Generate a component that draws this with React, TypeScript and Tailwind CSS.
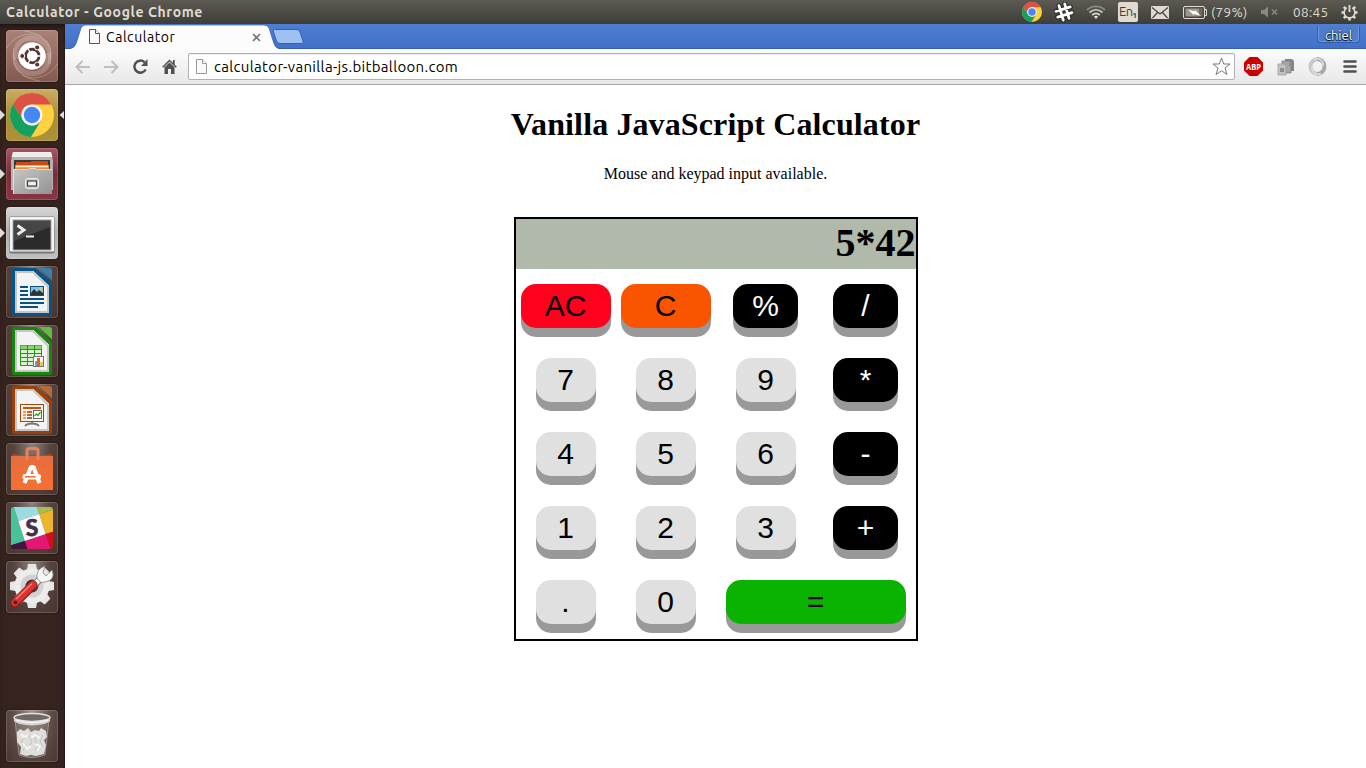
import React from "react";

const uiFont = "font-['Ubuntu','Noto_Sans',sans-serif]";

function ChromeLogo({ size }: { size: number }) {
  return (
    <svg width={size} height={size} viewBox="0 0 44 44">
      <circle cx="22" cy="22" r="22" fill="#ffd040" />
      <path d="M3 11 A22 22 0 0 1 41.300 11.500 H22 A10.500 10.500 0 0 0 12.500 27Z" fill="#dd5144" />
      <path d="M3 11 A22 22 0 0 0 21 44 L31 27.500 A10.500 10.500 0 0 1 12.900 27Z" fill="#14a05e" />
      <circle cx="22" cy="22" r="10.500" fill="#f5f5f5" />
      <circle cx="22" cy="22" r="8.200" fill="#4587f3" />
    </svg>
  );
}

function PageIcon({ color }: { color: string }) {
  return (
    <svg width="11" height="15" viewBox="0 0 11 15" fill="#fafafa" stroke={color}>
      <path d="M0.500 0.500H6.500L10.500 4.500V14.500H0.500Z" />
      <path d="M6.500 0.500V4.500H10.500" />
    </svg>
  );
}

function TopBar() {
  return (
    <header className={`flex h-6 shrink-0 items-center bg-linear-to-b from-[#5c5a52] to-[#3e3d38] pl-1.5 text-[#dfdbd2] ${uiFont}`}>
      <div className="w-[1016px] text-[14px] leading-6 font-bold">
        <span className="inline-block tracking-[0.620px] whitespace-nowrap">Calculator - Google Chrome</span>
      </div>
      <div className="flex w-8 items-center"><ChromeLogo size={20} /></div>
      <svg className="mr-3" width="20" height="20" viewBox="0 0 20 20" fill="none" strokeLinecap="round">
        <g transform="rotate(-17 10 10)">
          <path d="M7 2.500V17.500M13 2.500V17.500M2.500 7H17.500M2.500 13H17.500" stroke="#252521" strokeWidth="4.800" />
          <path d="M7 2.500V17.500M13 2.500V17.500M2.500 7H17.500M2.500 13H17.500" stroke="#fff" strokeWidth="2.800" />
        </g>
      </svg>
      <svg className="mr-3" width="20" height="16" viewBox="0 0 20 16" fill="none" strokeWidth="1.800">
        <path d="M1 6C6 1.200 14 1.200 19 6" stroke="#8b8981" />
        <path d="M3.500 8.500C7.500 5 12.500 5 16.500 8.500" stroke="#c8c4bb" />
        <path d="M6.200 11C8.500 9 11.500 9 13.800 11" stroke="#dfdbd2" />
        <path d="M7.800 12.500Q10 11 12.200 12.500L10 15Z" fill="#dfdbd2" stroke="none" />
      </svg>
      <div className="mr-[13px] flex h-5 w-5 items-center justify-center rounded-[2px] bg-[#dfdbd2] text-[13px] text-[#3f3e39]">
        <span className="tracking-[-0.500px]">En</span><span className="pt-2 text-[8px] font-semibold">1</span>
      </div>
      <svg className="mr-3.5" width="18" height="13" viewBox="0 0 18 13">
        <rect width="18" height="13" rx="1" fill="#dfdbd2" />
        <path d="M1 1.500L9 8L17 1.500M1.500 12L6.500 6.500M16.500 12L11.500 6.500" stroke="#45443e" fill="none" strokeWidth="1.200" />
      </svg>
      <svg className="mr-1" width="24" height="13" viewBox="0 0 24 13">
        <rect x="0.500" y="0.500" width="21" height="12" rx="1.500" fill="none" stroke="#dfdbd2" />
        <path d="M21.500 3.500H23.500V9.500H21.500" fill="none" stroke="#dfdbd2" />
        <rect x="2.500" y="2.500" width="13.500" height="8" fill="#99968e" />
        <rect x="16" y="2.500" width="3.500" height="8" fill="#6b6962" />
        <path d="M5 3.500L12 5.500L11.500 3.600L18 10L10.500 7.700L11 9.500Z" fill="#fff" />
      </svg>
      <span className="w-[50px] text-[13.500px] leading-6 tracking-[0.300px] whitespace-nowrap">(79%)</span>
      <svg className="mr-[15px]" width="17" height="12" viewBox="0 0 17 12">
        <path d="M0 4H3L7 0.500V11.500L3 8H0Z" fill="#8b8981" />
        <path d="M11 3.500L16 8.500M16 3.500L11 8.500" stroke="#8b8981" strokeWidth="1.500" />
      </svg>
      <span className="w-12 text-[13.500px] leading-6 tracking-[0.350px] whitespace-nowrap">08:45</span>
      <svg width="17" height="17" viewBox="0 0 17 17" fill="none" stroke="#dfdbd2">
        <path d="M2.800 14.200L4.600 12.400M14.200 14.200L12.400 12.400M0.500 8.500H3M14 8.500H16.500M8.500 16.500V14M2.800 2.800L4.600 4.600M14.200 2.800L12.400 4.600" strokeWidth="2.600" />
        <path d="M5.700 3.900A5.400 5.400 0 1 0 11.300 3.900" strokeWidth="1.600" />
        <path d="M8.500 1V8" strokeWidth="1.800" />
      </svg>
    </header>
  );
}

function UbuntuIcon() {
  return (
    <>
      <path d="M8 30C2 12 22 -2 40 10C47 15 47 30 41 37C45 24 39 13 27 11C16 9 10 18 12 28Z" fill="#fff" opacity=".2" />
      <path d="M44 22C50 40 32 52 14 43C7 38 6 30 8 22C10 34 18 41 27 41C36 41 41 33 39 24Z" fill="#fff" opacity=".2" />
      <path d="M18 1C38 3 48 16 44 34M1 18C8 5 24 1 36 7M34 51C14 48 4 36 8 18M51 34C44 47 28 51 16 45" fill="none" stroke="#fff" opacity=".25" />
      <circle cx="26" cy="26.500" r="14" fill="#3d241f" opacity=".25" />
      <circle cx="26" cy="26" r="13.800" fill="#fff" />
      <circle cx="26.300" cy="26" r="6.700" fill="none" stroke="#54362f" strokeWidth="3" />
      <path d="M26.300 26H37M26.300 26L21 17M26.300 26L21 35" stroke="#fff" strokeWidth="1.300" />
      <circle cx="26.300" cy="26" r="5.200" fill="#fff" />
      <g fill="#54362f" stroke="#fff" strokeWidth="1">
        <circle cx="16.200" cy="26" r="2.500" /><circle cx="31.200" cy="17.400" r="2.500" /><circle cx="31.200" cy="34.600" r="2.500" />
      </g>
    </>
  );
}

function FilesIcon() {
  return (
    <>
      <path d="M7 4H45L47 13V42H5V13Z" fill="#b3b3b1" />
      <path d="M7 4H45L46.500 9H5.500Z" fill="#ededec" />
      <rect x="8" y="12" width="36" height="12" fill="#3b3533" />
      <path d="M10 14H24L26 13H42V24H10Z" fill="#c94c14" />
      <path d="M9 17H43V24H9Z" fill="#f0893c" />
      <path d="M10 18.500H42" stroke="#fff1c9" strokeWidth="1.300" />
      <path d="M8 21H22L23 20H30L31 21H46V46H7V21Z" fill="url(#steel)" />
      <path d="M7.500 46V21.500H22L23 20.500H30L31 21.500H46" stroke="#ddd" fill="none" />
      <rect x="19.500" y="30.500" width="13" height="10" rx="2" fill="#c9c9c9" stroke="#eee" />
      <rect x="21.500" y="33" width="9" height="5" fill="#eee" stroke="#444" strokeWidth="1.200" />
    </>
  );
}

function TerminalIcon() {
  return (
    <>
      <rect x="3.500" y="9.500" width="45" height="37" rx="1.500" fill="#777" />
      <rect x="4" y="10" width="44" height="34.500" rx="1" fill="#f4f4f4" />
      <rect x="6.500" y="12.500" width="39" height="31" fill="#aaa" />
      <rect x="7.500" y="13.500" width="37" height="29" fill="#2b2b2b" />
      <path d="M8 14H44V20L8 34Z" fill="#fff" opacity=".13" />
      <path d="M11.500 18.500L18 23L11.500 27.500" fill="none" stroke="#eee" strokeWidth="2.800" />
      <path d="M20 29.500H28" stroke="#eee" strokeWidth="2.200" />
    </>
  );
}

function Sheet({ color, corner }: { color: string; corner: string }) {
  return (
    <>
      <path d="M8 2H30L46 17V48Q46 50 44 50H8Q6 50 6 48V4Q6 2 8 2Z" fill={color} />
      <path d="M9 5H27L43 20V47H9Z" fill="#c5c5c5" />
      <path d="M11 7H26.500L41 21V45H11Z" fill="#f3f3f3" />
      <path d="M33 2H43.500Q46 2 46 4.500V14.500Z" fill={corner} />
      <path d="M27 5L43 20" stroke="#fff" strokeWidth="1" opacity=".7" />
    </>
  );
}

function WriterIcon() {
  return (
    <>
      <Sheet color="#07548a" corner="#3b7fab" />
      <path d="M14 21H22M14 25H22M14 29H22M14 33H38M14 37H38M14 41H32" stroke="#0a5082" strokeWidth="2" />
      <rect x="24.500" y="20.500" width="13" height="9" fill="#83c5ea" stroke="#0a5082" />
      <path d="M25 29V27L28 23L31 26L33 24L37 27V29Z" fill="#333" /><circle cx="35" cy="22.500" r="1.500" fill="#f3c92c" />
    </>
  );
}

function CalcIcon() {
  return (
    <>
      <Sheet color="#19850e" corner="#5ebd40" />
      <rect x="14.500" y="20.500" width="21" height="20" fill="#d7f5cc" stroke="#269618" />
      <rect x="14.500" y="20.500" width="21" height="4" fill="#8ad276" />
      <path d="M14 24.500H36M14 28.500H36M14 32.500H36M14 36.500H36M21.500 20V41M28.500 20V41" stroke="#269618" />
      <rect x="27.500" y="31.500" width="10" height="10" fill="#fff" stroke="#777" />
      <path d="M30 36V41" stroke="#55a7db" strokeWidth="2" /><path d="M32.500 33V41" stroke="#e86118" strokeWidth="3" /><path d="M35.500 37V41" stroke="#efbd20" strokeWidth="2.500" />
    </>
  );
}

function ImpressIcon() {
  return (
    <>
      <Sheet color="#9a4009" corner="#b7683d" />
      <path d="M26 38V40M19 42Q21 39.500 26 39.500T33 42" fill="none" stroke="#777" strokeWidth="1.800" />
      <rect x="14.500" y="20.500" width="23" height="17" fill="#fff2e8" stroke="#a8440b" />
      <path d="M17 24H35" stroke="#c75212" strokeWidth="2" />
      <path d="M17 28H20M17 31H20M17 34H20" stroke="#ed9866" strokeWidth="2" />
      <path d="M21 28H26M21 31H26M21 34H26" stroke="#963a08" strokeWidth="1.700" />
      <rect x="27.500" y="26.500" width="8" height="8" fill="#f8fff4" stroke="#666" />
      <path d="M28.500 32L30.500 30L32 31.500L34.500 28" stroke="#36a41c" strokeWidth="1.400" fill="none" />
    </>
  );
}

function SoftwareIcon() {
  return (
    <>
      <path d="M8 10L5 14H47L44 10L41 12H11Z" fill="#b84420" />
      <rect x="5" y="13" width="42" height="34" fill="url(#bag)" />
      <path d="M21 17V8Q21 5.500 23.500 5.500H29.500Q32 5.500 32 8V17" fill="none" stroke="#e9825b" strokeWidth="3" />
      <path d="M18.500 40L25 24H27.500L33.500 40" fill="none" stroke="#fff" strokeWidth="4.200" strokeLinejoin="bevel" />
      <rect x="16.500" y="31" width="18.500" height="5.500" rx="2.700" fill="#fff" />
      <path d="M19 33.700H29.500" stroke="#ed6832" strokeWidth="1.600" />
    </>
  );
}

function SlackIcon() {
  return (
    <>
      <clipPath id="slackClip"><rect x="5" y="5" width="42" height="42" rx="3" /></clipPath>
      <g clipPath="url(#slackClip)">
        <g transform="rotate(-18 26 25.500)">
          <path d="M-10 -10H15V36H-10Z" fill="#47c39c" />
          <path d="M15 -10H37V15H15Z" fill="#9bdce2" />
          <path d="M37 -10H65V15H37Z" fill="#a7bd51" />
          <path d="M37 15H65V36H37Z" fill="#ecb52a" />
          <path d="M37 36H65V65H37Z" fill="#d50d17" />
          <path d="M15 36H37V65H15Z" fill="#e41773" />
          <path d="M-10 36H15V65H-10Z" fill="#42143f" />
          <path d="M15 15H37V36H15Z" fill="#fafafa" />
        </g>
      </g>
      <text x="26" y="34" textAnchor="middle" transform="rotate(-3 26 26)" className="fill-[#443047] stroke-[#443047] font-['Lato',sans-serif] text-[23px] font-black [stroke-width:0.600px]">S</text>
    </>
  );
}

function SettingsIcon() {
  return (
    <>
      {[0, 45, 90, 135, 180, 225, 270, 315].map((a) => (
        <path key={a} d="M20.500 11L22 3H30L31.500 11Z" fill="#e6e6e6" transform={`rotate(${a} 26 25)`} />
      ))}
      <circle cx="26" cy="25" r="17.500" fill="#ececec" />
      <circle cx="26" cy="25" r="11.500" fill="#d2d2d2" /><circle cx="26" cy="25" r="6.500" fill="#44312e" />
      <path d="M26 27L34 18" stroke="#777" strokeWidth="7" />
      <path d="M26 26L35 17" stroke="#f3f3f3" strokeWidth="5" />
      <path d="M31 17Q30 8 39 5L37 12L40 15L46 9Q50 19 39 21Q34 23 31 17Z" fill="#f6f6f6" stroke="#888" strokeWidth=".8" />
      <path d="M9 42L27 24" stroke="#951b19" strokeWidth="9" strokeLinecap="round" />
      <path d="M9 41.500L27 23.500" stroke="#d9352e" strokeWidth="7" strokeLinecap="round" />
      <path d="M10 38L26 22.500" stroke="#f38780" strokeWidth="1.200" />
      <circle cx="9.500" cy="41.500" r="2" fill="#51211f" />
    </>
  );
}

function TrashIcon() {
  return (
    <>
      <path d="M9 10L13 45Q26 50 39 45L43 10Z" fill="#999" opacity=".3" />
      <path d="M9 10L13 45Q26 50 39 45L43 10" fill="none" stroke="#c9c7c7" opacity=".5" />
      <path d="M11 22L14 19L18 21L22 18L25 22L29 20L33 21L35 18L40 21L41 27L38 30L40 35L38 44L30 46L25 45L20 46L14 44L15 37L11 32Z" fill="#dededb" />
      <path d="M16 24L19 28L15 31L20 35L17 41M22 25L26 31L23 38M31 24L29 30L32 36L29 41M37 25L34 31L37 37" fill="none" stroke="#b9b9b6" strokeWidth=".8" />
      <path d="M15 24L18 27L22 25M25 28L29 25L34 28M17 33L21 39L25 36M29 34L34 36L31 41" fill="none" stroke="#f5f5f5" strokeWidth="2" />
      <ellipse cx="26" cy="7.500" rx="18" ry="4" fill="#6e6868" stroke="#e3e3e3" strokeWidth="1.500" />
      <path d="M8 8Q26 15 44 8V11Q42 14.500 26 15.500Q10 14.500 8 11Z" fill="#d6d6d5" />
      <path d="M10 10Q26 15 42 10" stroke="#fff" fill="none" />
    </>
  );
}

const tile =
  "shrink-0 rounded-[4px] shadow-[inset_0_0_0_1px_rgba(255,255,255,0.16),0_0_1px_1px_rgba(0,0,0,0.18)]";
const darkTile = "bg-[radial-gradient(ellipse_at_50%_0%,#8b807b_0%,#56443e_50%,#48342f_100%)]";

const apps: { bg: string; icon: React.ReactNode; left?: boolean; right?: boolean }[] = [
  { bg: "bg-linear-to-b from-[#aa8278] to-[#86594e]", icon: <UbuntuIcon /> },
  { bg: "bg-linear-to-b from-[#c9ae65] via-[#aa8e36] to-[#ad9138]", icon: <g transform="translate(4 4)"><ChromeLogo size={44} /></g>, left: true, right: true },
  { bg: "bg-linear-to-b from-[#a65663] via-[#7b2b38] to-[#883642]", icon: <FilesIcon />, left: true },
  { bg: "bg-linear-to-b from-[#d6d6d6] via-[#aeaeae] to-[#c0c0c0]", icon: <TerminalIcon />, left: true },
  { bg: darkTile, icon: <WriterIcon /> },
  { bg: darkTile, icon: <CalcIcon /> },
  { bg: darkTile, icon: <ImpressIcon /> },
  { bg: darkTile, icon: <SoftwareIcon /> },
  { bg: darkTile, icon: <SlackIcon /> },
  { bg: darkTile, icon: <SettingsIcon /> },
];

function Launcher() {
  return (
    <nav className="flex w-[65px] shrink-0 flex-col gap-[7px] bg-[#35231e] pt-1.5 pb-1.5 shadow-[inset_0_4px_4px_-2px_#1b1311,inset_-1px_0_0_#2a1b17]">
      <svg width="0" height="0" className="-mb-[7px]">
        <linearGradient id="steel" x1="0" y1="0" x2="1" y2="1"><stop stopColor="#c7c7c6" /><stop offset="1" stopColor="#929291" /></linearGradient>
        <linearGradient id="bag" x1="0" y1="0" x2="0" y2="1"><stop stopColor="#e56d40" /><stop offset="1" stopColor="#f77030" /></linearGradient>
      </svg>
      {apps.map((app, i) => (
        <div key={i} className="flex h-[52px] shrink-0 items-center">
          <svg width="6" height="10" viewBox="0 0 6 10">{app.left && <path d="M0 0L5 5L0 10Z" fill="#ddd" />}</svg>
          <svg width="52" height="52" viewBox="0 0 52 52" className={`${tile} ${app.bg}`}>{app.icon}</svg>
          <svg width="7" height="10" viewBox="0 0 7 10">{app.right && <path d="M6 1L1.500 5L6 9Z" fill="#ddd" />}</svg>
        </div>
      ))}
      <div className="mt-auto flex h-[52px] pl-1.5">
        <svg width="52" height="52" viewBox="0 0 52 52" className={`${tile} bg-[radial-gradient(ellipse_at_50%_0%,#a0928d_0%,#634f4a_50%,#48342f_100%)]`}><TrashIcon /></svg>
      </div>
    </nav>
  );
}

function TabStrip() {
  return (
    <div className={`flex h-[25px] shrink-0 bg-linear-to-b from-[#4f7ed3] to-[#4070c7] pl-0.5 shadow-[inset_0_-1px_0_#335fae] ${uiFont}`}>
      <div className="grid w-[208px]">
        <svg className="col-start-1 row-start-1" width="214" height="25" viewBox="0 0 214 25">
          <path d="M3 25Q7.500 24 9 20L14 4Q15.500 1 18 1H197Q200.500 1 202 4L207 20Q208.500 24 212 25Z" fill="#fcfcfc" />
          <path d="M3 24.500Q7.500 23.500 9 19.500L14 4Q15.500 1 18 1H197Q200.500 1 202 4L207 19.500Q208.500 23.500 212 24.500" fill="none" stroke="#3159a3" strokeWidth=".7" />
        </svg>
        <div className="z-10 col-start-1 row-start-1 flex h-[25px] items-center pl-[22px] text-black">
          <PageIcon color="#555" />
          <span className="ml-[6px] w-[146px] pt-px text-[14px] leading-6 tracking-[0.550px]">Calculator</span>
          <svg className="mt-px" width="9" height="9" viewBox="0 0 9 9"><path d="M1 1L8 8M8 1L1 8" stroke="#777" strokeWidth="1.700" /></svg>
        </div>
      </div>
      <svg className="mt-[5px] -ml-[3px]" width="32" height="16" viewBox="0 0 32 16">
        <path d="M2.500 .5H25Q27 .5 28 3L31 12Q32 14.500 29.500 14.500H8Q5.500 14.500 4.500 12L1.500 3Q.5 .5 2.500 .5Z" fill="#9dc1f3" stroke="#3560ae" />
      </svg>
      <div className="mt-[2px] mr-[6px] ml-auto h-[17px] w-[43px] rounded-b-[4px] border-x border-b border-[#345da9] bg-[#4f7dce] text-center text-[13px] leading-[18px] text-white shadow-[inset_-1px_-1px_0_#7197dc,inset_1px_0_0_#7197dc] [text-shadow:0_0_2px_#000,0_1px_1px_#000]">chiel</div>
    </div>
  );
}

function Toolbar() {
  return (
    <div className={`flex h-9 shrink-0 items-center border-b border-[#a6a6a6] bg-linear-to-b from-[#fcfcfc] to-[#e7e7e7] pl-[10px] ${uiFont}`}>
      <svg className="mr-3.5" width="15" height="14" viewBox="0 0 15 14" fill="none" stroke="#bebebe" strokeWidth="2"><path d="M15 7H2M7.500 1L1.500 7L7.500 13" /></svg>
      <svg className="mr-3.5" width="15" height="14" viewBox="0 0 15 14" fill="none" stroke="#bebebe" strokeWidth="2"><path d="M0 7H13M7.500 1L13.500 7L7.500 13" /></svg>
      <svg className="mr-3.5" width="15" height="15" viewBox="0 0 15 15"><path d="M12.700 10.500A6 6 0 1 1 11.500 3.200" fill="none" stroke="#505050" strokeWidth="2.500" /><path d="M14.500 0V7H8Z" fill="#505050" /></svg>
      <svg className="mr-[11px]" width="15" height="15" viewBox="0 0 15 15"><path d="M7.500 3.500L12.500 8.300V15H9V10H6V15H2.500V8.300Z" fill="#505050" /><path d="M0.700 8.300L7.500 1.500L14.300 8.300" stroke="#505050" fill="none" strokeWidth="1.500" /><path d="M11.800 1V5.500" stroke="#505050" strokeWidth="1.800" /></svg>
      <div className="flex h-[27px] w-[1047px] items-center rounded-[2px] border border-[#b0b0b0] bg-white pr-[3px] pl-[7px] shadow-[inset_0_1px_0_#eee]">
        <PageIcon color="#999" />
        <span className="ml-[7px] flex-1 text-[15px] leading-[25px] tracking-[0.330px] text-black">calculator-vanilla-js.bitballoon.com</span>
        <svg width="19" height="19" viewBox="0 0 19 19" fill="#fff" stroke="#777"><path d="M9.500 1L11.700 7H18L13 11L15 17.500L9.500 13.700L4 17.500L6 11L1 7H7.300Z" /></svg>
      </div>
      <svg className="ml-[9px]" width="19" height="19" viewBox="0 0 19 19">
        <path d="M5.500 0H13.500L19 5.500V13.500L13.500 19H5.500L0 13.500V5.500Z" fill="#ca0000" />
        <text x="9.500" y="12.800" textAnchor="middle" textLength="15" lengthAdjust="spacingAndGlyphs" className="fill-white font-['Noto_Sans',sans-serif] text-[9px] font-bold">ABP</text>
      </svg>
      <svg className="ml-3.5" width="18" height="18" viewBox="0 0 18 18">
        <path d="M8 1H15L17 3V13H8Z" fill="#858585" /><path d="M5 3H12L14 5V15H5Z" fill="#a8a8a8" stroke="#777" strokeWidth=".7" /><path d="M1 6H7L9 8V17H1Z" fill="#c2c2c2" stroke="#999" strokeWidth=".7" /><path d="M3 10H7V14H3ZM12 5H15V8H12Z" fill="#8c8c8c" />
      </svg>
      <svg className="ml-[13px]" width="19" height="19" viewBox="0 0 19 19" fill="none">
        <path d="M10 2A7.500 7.500 0 1 0 10 17" stroke="#c7c7c7" strokeWidth="4" /><path d="M9 2A7.500 7.500 0 0 1 9 17" stroke="#a8a8a8" strokeWidth="4" /><path d="M6 2.500C11 0 16 4 15 9M13 16.500C8 19 3 15 4 10" stroke="#dedede" strokeWidth="1.500" />
      </svg>
      <svg className="ml-4" width="14" height="13" viewBox="0 0 14 13"><path d="M1.500 1.500H12.500M1.500 6.500H12.500M1.500 11.500H12.500" stroke="#505050" strokeWidth="2.600" strokeLinecap="round" /></svg>
    </div>
  );
}

const num = "w-[60px] bg-[#e0e0e0] text-black";
const op = "w-[65px] bg-black text-white";
const keys: { label: string; style: string; wide?: boolean }[] = [
  { label: "AC", style: "w-[90px] bg-[#ff001d] text-black" },
  { label: "C", style: "w-[90px] bg-[#fb5400] text-black" },
  { label: "%", style: op }, { label: "/", style: op },
  { label: "7", style: num }, { label: "8", style: num }, { label: "9", style: num }, { label: "*", style: op },
  { label: "4", style: num }, { label: "5", style: num }, { label: "6", style: num }, { label: "-", style: op },
  { label: "1", style: num }, { label: "2", style: num }, { label: "3", style: num }, { label: "+", style: op },
  { label: ".", style: num }, { label: "0", style: num },
  { label: "=", style: "w-[180px] bg-[#0ab300] text-black", wide: true },
];

function Calculator() {
  return (
    <main className="flex flex-1 flex-col items-center bg-white pt-[21px] font-['Liberation_Serif',serif] text-black">
      <h1 className="text-[32px] leading-[37px] font-bold tracking-[0.120px]">Vanilla JavaScript Calculator</h1>
      <p className="mt-[22px] text-base leading-[18px]">Mouse and keypad input available.</p>
      <section className="mt-[34px] w-[404px] border-2 border-black">
        <div className="h-[50px] bg-[#b1b9ab] text-right text-[40px] leading-[48px] font-bold">5*42</div>
        <div className="grid grid-cols-4">
          {keys.map((k) => (
            <div key={k.label} className={`flex h-[74px] items-center justify-center ${k.wide ? "col-span-2" : ""}`}>
              <button className={`h-11 rounded-[15px] font-['Liberation_Sans',sans-serif] text-[30px] leading-[44px] shadow-[0_9px_#999] ${k.style}`}>{k.label}</button>
            </div>
          ))}
        </div>
      </section>
    </main>
  );
}

export default function App() {
  return (
    <div className="flex h-screen w-screen flex-col overflow-hidden">
      <TopBar />
      <div className="flex min-h-0 flex-1">
        <Launcher />
        <div className="flex min-w-0 flex-1 flex-col">
          <TabStrip />
          <Toolbar />
          <Calculator />
        </div>
      </div>
    </div>
  );
}
